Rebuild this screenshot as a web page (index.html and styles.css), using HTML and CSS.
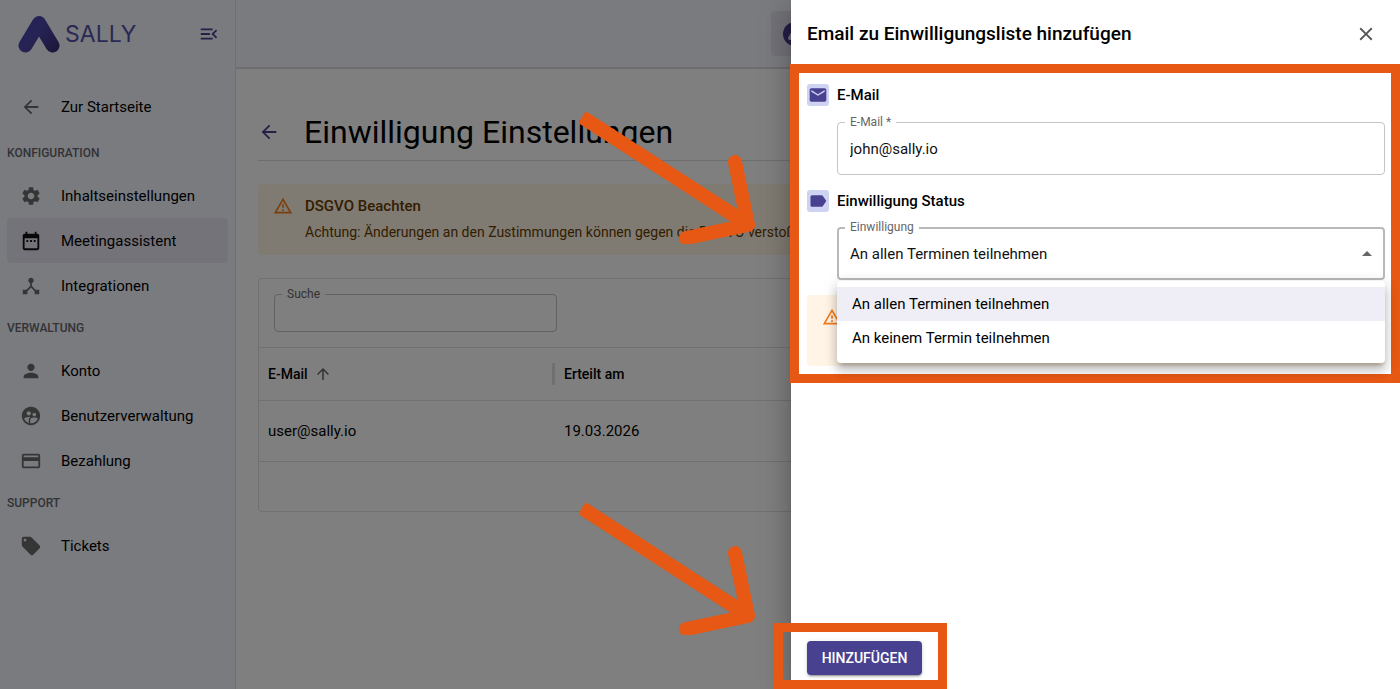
FILE: index.html
```html
<!DOCTYPE html>
<html lang="de">
<head>
<meta charset="utf-8">
<title>Sally – Einwilligung Einstellungen</title>
<link rel="stylesheet" href="styles.css">
</head>
<body>
<svg class="defs" width="0" height="0" aria-hidden="true">
  <symbol id="i-back" viewBox="0 0 24 24"><path d="M20 11H7.8l5.6-5.6L12 4l-8 8 8 8 1.400-1.400L7.800 13H20z"/></symbol>
  <symbol id="i-warn" viewBox="0 0 24 24"><path d="M12 5.990 19.530 19H4.470zM12 2 1 21h22zm1 14h-2v2h2zm0-6h-2v4h2z"/></symbol>
  <symbol id="i-arrow" viewBox="0 0 180 132"><path d="M3 5 170 113" stroke-linecap="butt"/><path d="M156 50 169 113 107 126" stroke-linecap="round" stroke-linejoin="round"/></symbol>
</svg>
<div class="app">
  <aside class="sidebar">
    <div class="brand">
      <svg class="brand-mark" viewBox="0 0 42 38" aria-hidden="true">
        <defs><linearGradient id="g" gradientUnits="userSpaceOnUse" x1="4" y1="8" x2="38" y2="34"><stop offset="0" stop-color="#4a44b4"/><stop offset=".45" stop-color="#4c46a8"/><stop offset="1" stop-color="#3b2f78"/></linearGradient></defs>
        <path d="M7.500 30.500 21 8 34.500 30.500" fill="none" stroke="url(#g)" stroke-width="14" stroke-linecap="round" stroke-linejoin="round"/>
      </svg>
      <span class="brand-name">SALLY</span>
      <button class="icon-btn collapse" aria-label="Menü einklappen"><svg viewBox="0 0 24 24"><path d="M3 18h13v-2H3zm0-5h10v-2H3zm0-7v2h13V6zm18 9.590L17.420 12 21 8.410 19.590 7l-5 5 5 5z"/></svg></button>
    </div>
    <nav>
      <a class="item start" href="#"><svg><use href="#i-back"/></svg>Zur Startseite</a>
      <h2>KONFIGURATION</h2>
      <a class="item" href="#"><svg viewBox="0 0 24 24"><path d="M19.140 12.940c.040-.300.060-.610.060-.940 0-.320-.020-.640-.070-.940l2.030-1.580c.180-.140.230-.410.120-.610l-1.920-3.320c-.120-.220-.370-.290-.590-.220l-2.390.960c-.500-.380-1.030-.700-1.620-.940l-.360-2.540c-.040-.240-.240-.410-.480-.410h-3.840c-.240 0-.430.170-.470.410l-.360 2.540c-.590.240-1.130.570-1.620.940l-2.390-.960c-.220-.080-.470 0-.590.220L2.740 8.870c-.120.210-.080.470.120.610l2.030 1.580c-.050.300-.090.630-.090.940s.020.640.070.940l-2.030 1.580c-.180.140-.230.410-.120.610l1.920 3.320c.120.220.370.290.590.220l2.390-.960c.500.380 1.030.700 1.620.940l.360 2.540c.050.240.240.410.480.410h3.840c.240 0 .440-.170.470-.410l.360-2.540c.590-.240 1.130-.560 1.620-.940l2.390.960c.220.080.470 0 .590-.220l1.920-3.320c.120-.220.070-.470-.120-.610zM12 15.600c-1.980 0-3.600-1.620-3.600-3.600s1.620-3.600 3.600-3.600 3.600 1.620 3.600 3.600-1.620 3.600-3.600 3.600"/></svg>Inhaltseinstellungen</a>
      <a class="item active" href="#" aria-current="page"><svg viewBox="0 0 24 24"><path d="M9 11H7v2h2zm4 0h-2v2h2zm4 0h-2v2h2zm2-7h-1V2h-2v2H8V2H6v2H5c-1.110 0-1.990.900-1.990 2L3 20c0 1.100.890 2 2 2h14c1.100 0 2-.900 2-2V6c0-1.100-.900-2-2-2m0 16H5V9h14z"/></svg>Meetingassistent</a>
      <a class="item" href="#"><svg viewBox="0 0 24 24"><path d="m17 16-4-4V8.820C14.160 8.400 15 7.300 15 6c0-1.660-1.340-3-3-3S9 4.340 9 6c0 1.300.840 2.400 2 2.820V12l-4 4H3v5h5v-3.050l4-4.200 4 4.200V21h5v-5z"/></svg>Integrationen</a>
      <h2>VERWALTUNG</h2>
      <a class="item" href="#"><svg viewBox="0 0 24 24"><path d="M12 12c2.210 0 4-1.790 4-4s-1.790-4-4-4-4 1.790-4 4 1.790 4 4 4m0 2c-2.670 0-8 1.340-8 4v2h16v-2c0-2.660-5.330-4-8-4"/></svg>Konto</a>
      <a class="item" href="#"><svg viewBox="0 0 24 24"><path d="M11.990 2c-5.520 0-10 4.480-10 10s4.480 10 10 10 10-4.480 10-10-4.480-10-10-10m3.610 6.340c1.070 0 1.930.860 1.930 1.930s-.860 1.930-1.930 1.930-1.930-.860-1.930-1.930c-.010-1.070.860-1.930 1.930-1.930m-6-1.580c1.300 0 2.360 1.060 2.360 2.360s-1.060 2.360-2.360 2.360-2.360-1.060-2.360-2.360c0-1.310 1.050-2.360 2.360-2.360m0 9.130v3.750c-2.400-.750-4.300-2.600-5.140-4.960 1.050-1.120 3.670-1.690 5.140-1.690.530 0 1.200.080 1.900.220-1.640.870-1.900 2.020-1.900 2.680M11.990 20c-.270 0-.530-.010-.790-.040v-4.070c0-1.420 2.940-2.130 4.400-2.130 1.070 0 2.920.390 3.840 1.150-1.170 2.970-4.060 5.090-7.450 5.090"/></svg>Benutzerverwaltung</a>
      <a class="item" href="#"><svg viewBox="0 0 24 24"><path d="M20 4H4c-1.110 0-1.990.890-1.990 2L2 18c0 1.110.890 2 2 2h16c1.110 0 2-.890 2-2V6c0-1.110-.890-2-2-2m0 14H4v-6h16zm0-10H4V6h16z"/></svg>Bezahlung</a>
      <h2>SUPPORT</h2>
      <a class="item" href="#"><svg viewBox="0 0 24 24"><path d="m21.410 11.580-9-9C12.050 2.220 11.550 2 11 2H4c-1.100 0-2 .900-2 2v7c0 .550.220 1.050.590 1.420l9 9c.360.360.860.580 1.410.580s1.050-.220 1.410-.590l7-7c.370-.360.590-.860.590-1.410s-.230-1.060-.590-1.420M5.500 7C4.670 7 4 6.330 4 5.500S4.670 4 5.500 4 7 4.670 7 5.500 6.330 7 5.500 7"/></svg>Tickets</a>
    </nav>
  </aside>
  <div class="page">
    <header class="topbar">
      <button class="chip" aria-label="Assistent"><svg viewBox="0 0 24 24"><circle cx="12" cy="12" r="12" fill="#484190"/><path d="M7 16 12 8 17 16" fill="none" stroke="#e4e4f4" stroke-width="4" stroke-linecap="round" stroke-linejoin="round"/></svg></button>
    </header>
    <main>
      <div class="title-row">
        <button class="icon-btn" aria-label="Zurück"><svg><use href="#i-back"/></svg></button>
        <h1>Einwilligung Einstellungen</h1>
      </div>
      <section class="alert">
        <svg><use href="#i-warn"/></svg>
        <div><h3>DSGVO Beachten</h3><p>Achtung: Änderungen an den Zustimmungen können gegen die DSGVO verstoßen</p></div>
      </section>
      <section class="card">
        <div class="search-wrap"><div class="field search"><label for="q">Suche</label><input id="q" type="text"></div></div>
        <table>
          <thead><tr>
            <th scope="col"><div class="th">E-Mail <svg viewBox="0 0 24 24"><path d="m4 12 1.410 1.410L11 7.830V20h2V7.830l5.580 5.590L20 12l-8-8z"/></svg></div></th>
            <th scope="col">Erteilt am</th>
          </tr></thead>
          <tbody><tr><td>user@sally.io</td><td>19.03.2026</td></tr></tbody>
        </table>
        <div class="card-foot"></div>
      </section>
    </main>
  </div>
</div>
<div class="backdrop"></div>
<div class="drawer" role="dialog" aria-labelledby="dt">
  <header class="drawer-head">
    <h2 id="dt">Email zu Einwilligungsliste hinzufügen</h2>
    <button class="icon-btn" aria-label="Schließen"><svg viewBox="0 0 24 24"><path d="M19 6.410 17.590 5 12 10.590 6.410 5 5 6.410 10.590 12 5 17.590 6.410 19 12 13.410 17.590 19 19 17.590 13.410 12z"/></svg></button>
  </header>
  <div class="form">
    <div class="group-head"><span class="badge"><svg viewBox="0 0 24 24"><path d="M20 4H4c-1.100 0-1.990.900-1.990 2L2 18c0 1.100.900 2 2 2h16c1.100 0 2-.900 2-2V6c0-1.100-.900-2-2-2m0 4-8 5-8-5V6l8 5 8-5z"/></svg></span><h3>E-Mail</h3></div>
    <div class="field"><label for="mail">E-Mail *</label><input id="mail" type="email" value="john@sally.io"></div>
    <div class="group-head"><span class="badge"><svg viewBox="0 0 24 24"><path d="M17.630 5.840C17.270 5.330 16.670 5 16 5L5 5.010C3.900 5.010 3 5.900 3 7v10c0 1.100.900 1.990 2 1.990L16 19c.670 0 1.270-.330 1.630-.840L22 12z"/></svg></span><h3>Einwilligung Status</h3></div>
    <div class="field select">
      <label for="st">Einwilligung</label>
      <select id="st"><option>An allen Terminen teilnehmen</option><option>An keinem Termin teilnehmen</option></select>
      <svg class="caret" viewBox="0 0 10 5"><path d="M0 5 5 0l5 5z"/></svg>
      <ul class="menu" role="listbox" aria-label="Einwilligung">
        <li role="option" aria-selected="true">An allen Terminen teilnehmen</li>
        <li role="option" aria-selected="false">An keinem Termin teilnehmen</li>
      </ul>
    </div>
    <div class="alert drawer-alert"><svg><use href="#i-warn"/></svg></div>
    <svg class="arrow"><use href="#i-arrow"/></svg>
  </div>
  <footer class="drawer-foot">
    <button class="primary">HINZUFÜGEN</button>
    <svg class="arrow"><use href="#i-arrow"/></svg>
  </footer>
</div>
</body>
</html>
```
FILE: styles.css
```css
* { box-sizing: border-box; }
body { margin: 0; height: 100vh; overflow: hidden; position: relative; background: #fff; color: #000; font: 15px/24px Roboto, sans-serif; }
h1, h2, h3, p, ul { margin: 0; padding: 0; }
button { font: inherit; border: 0; padding: 0; background: none; cursor: pointer; }
svg { fill: currentColor; flex: none; }
.defs { position: absolute; }
.icon-btn { display: flex; color: #484190; }
.icon-btn svg { width: 22px; height: 22px; }

.app { display: flex; height: 100%; }
.sidebar { width: 236px; flex: none; background: #f5f7ff; border-right: 1px solid #e0e0e0; padding: 0 7px; }
.brand { display: flex; align-items: center; height: 68px; padding: 0 8px 0 11px; margin-bottom: 16px; }
.brand-mark { width: 42px; height: 38px; }
.brand-name { font: 400 23px/28px Inter, sans-serif; color: #5550a8; margin-left: 5px; }
.collapse { margin-left: auto; }
.sidebar .item { display: flex; align-items: center; gap: 19px; height: 45px; padding: 0 13px; border-radius: 4px; color: #000; text-decoration: none; }
.item svg { width: 22px; height: 22px; color: #6b6b6b; }
.item.start { margin-bottom: 4px; }
.item.active { background: #e9e7f2; }
.item.active svg { color: #111; }
.sidebar h2 { font-size: 12px; font-weight: 500; line-height: 40px; color: #66666a; }

.page { flex: 1; min-width: 0; }
.topbar { display: flex; justify-content: center; align-items: center; height: 69px; background: #f5f7ff; border-bottom: 2px solid #dadada; }
.chip { width: 94px; height: 45px; padding: 0 12px; border-radius: 4px; background: #e6e5f3; display: flex; align-items: center; }
.chip svg { width: 24px; height: 24px; }
main { padding: 35px 22px 0; }
.title-row { display: flex; align-items: center; gap: 24px; height: 57px; border-bottom: 1px solid #dcdcdc; }
h1 { font-size: 32px; line-height: 40px; font-weight: 400; white-space: nowrap; }
.alert { display: flex; gap: 12px; height: 71px; margin-top: 23px; padding: 10px 15px; border-radius: 4px; background: #fff4e5; color: #663c00; }
.alert svg { width: 20px; height: 20px; margin-top: 2px; color: #f57c1b; }
.alert h3 { font-size: 15px; line-height: 24px; font-weight: 500; }
.alert p { font-size: 14px; line-height: 20px; margin-top: 4px; white-space: nowrap; }
.card { margin-top: 23px; border: 1px solid #e0e0e0; border-radius: 4px; }
.search-wrap { padding: 15px; }
.field { position: relative; }
.field label { position: absolute; left: 8px; top: -8px; padding: 0 5px; font-size: 12px; line-height: 16px; background: #fff; color: #666; }
.field input, .field select { display: block; width: 100%; height: 53px; border: 1px solid #c4c4c4; border-radius: 4px; padding: 0 12px; font: inherit; background: transparent; color: #111; appearance: none; outline: 0; }
.field.search { width: 283px; }
.field.search input { height: 38px; }
table { width: 100%; border-collapse: collapse; table-layout: fixed; text-align: left; }
th, td { padding: 0 9px; border: 0 solid #e0e0e0; border-width: 1px 0; color: #000; }
th { height: 53px; font-size: 14px; font-weight: 500; }
td { height: 61px; }
th:first-child { width: 296px; padding-right: 0; }
.th { display: flex; align-items: center; gap: 6px; height: 22px; border-right: 3px solid #e0e0e0; }
.th svg { width: 18px; height: 18px; color: #666; }
.card-foot { height: 49px; }

.backdrop { position: absolute; inset: 0; background: rgba(0, 0, 0, .5); }
.drawer { position: absolute; top: 0; right: 0; bottom: 0; width: 43.5vw; display: flex; flex-direction: column; background: #fff; box-shadow: 0 8px 10px -5px rgba(0,0,0,.2), 0 16px 24px 2px rgba(0,0,0,.14), 0 6px 30px 5px rgba(0,0,0,.12); }
.drawer-head { display: flex; align-items: center; justify-content: space-between; height: 68px; padding: 0 23px 0 16px; }
.drawer-head h2 { font-size: 19px; font-weight: 500; line-height: 28px; }
.drawer-head .icon-btn { color: #555; }
.form { position: relative; padding: 15px 15px 0 16px; }
.form::after { content: ""; position: absolute; inset: -4px 0 -17px -1px; border: 9px solid #e65813; pointer-events: none; }
.group-head { display: flex; align-items: center; gap: 8px; height: 24px; }
.group-head h3 { font-size: 15px; font-weight: 500; line-height: 24px; }
.badge { display: grid; place-items: center; width: 22px; height: 22px; border-radius: 3px; background: #cfd3f2; color: #484190; }
.badge svg { width: 20px; height: 20px; }
.form .field { margin: 15px 0 14px 30px; }
.form .field.select { margin-top: 14px; }
.select select { border: 2px solid #b9b9b9; padding: 0 11px; }
.caret { position: absolute; right: 13px; top: 24px; width: 10px; height: 5px; color: #666; }
.menu { position: absolute; z-index: 1; top: 54px; left: 0; right: 0; padding: 6px 0 8px; list-style: none; background: #fff; border-radius: 4px; box-shadow: 0 5px 5px -3px rgba(0,0,0,.2), 0 8px 10px 1px rgba(0,0,0,.14), 0 3px 14px 2px rgba(0,0,0,.12); }
.menu li { padding: 5px 15px; }
.menu li[aria-selected="true"] { background: #efeef6; }
.drawer-alert { margin-top: 15px; }
.arrow { position: absolute; width: 180px; height: 132px; fill: none; stroke: #e65813; stroke-width: 14px; left: -212px; }
.form .arrow { top: 44px; }
.drawer-foot { position: relative; margin-top: auto; padding: 18px 16px 14px; width: 156px; }
.drawer-foot::after { content: ""; position: absolute; inset: 0 0 0 -17px; border: 9px solid #e65813; pointer-events: none; }
.drawer-foot .arrow { bottom: 54px; }
.primary { display: block; width: 115px; height: 34px; border-radius: 4px; background: #484190; color: #fff; font-size: 14px; line-height: 32px; font-weight: 500; box-shadow: 0 3px 1px -2px rgba(0,0,0,.2), 0 2px 2px rgba(0,0,0,.14), 0 1px 5px rgba(0,0,0,.12); }
```
